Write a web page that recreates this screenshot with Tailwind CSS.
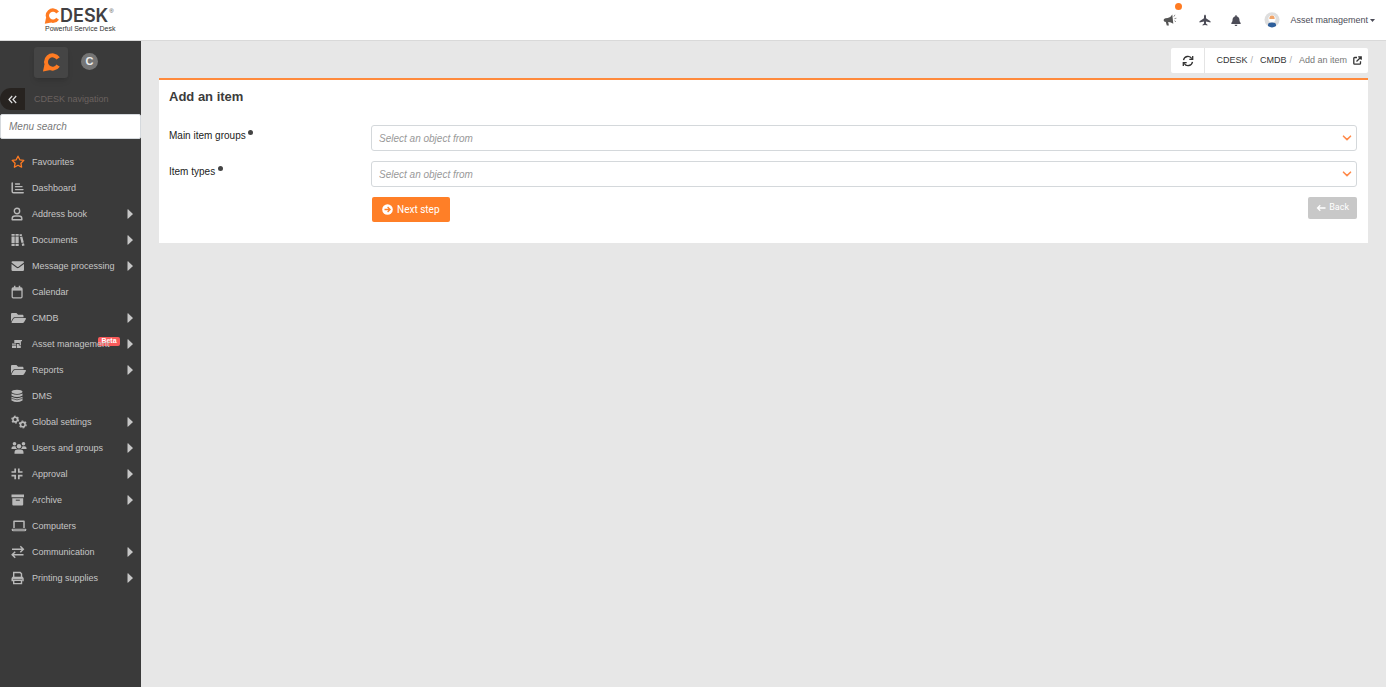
<!DOCTYPE html>
<html lang="en">
<head>
    <meta charset="UTF-8">
    <meta name="viewport" content="width=device-width, initial-scale=1.0">
    <title>CDESK - Add an item</title>
    <script src="https://cdn.jsdelivr.net/npm/@tailwindcss/browser@4"></script>
</head>
<body class="min-h-screen flex flex-col bg-[#e7e7e7] text-[#444] font-['Liberation_Sans',Arial,sans-serif] text-[9px]">
    <!-- Shared shapes -->
    <svg class="hidden">
        <symbol id="logo-c" viewBox="0 0 20 20">
            <path d="M17 5.6A7 7 0 1 0 17 13.4" fill="none" stroke="#ff7b22" stroke-width="4.2"/>
            <path d="M2.6 12L1 19.6L9 18Z" fill="#ff7b22"/>
        </symbol>
        <symbol id="folder" viewBox="0 0 576 512">
            <path d="M572.694 292.093L500.27 416.248A63.997 63.997 0 0 1 444.989 448H45.025c-18.523 0-30.064-20.093-20.731-36.093l72.424-124.155A64 64 0 0 1 152 256h399.964c18.523 0 30.064 20.093 20.73 36.093zM152 224h328v-48c0-26.51-21.49-48-48-48H272l-64-64H48C21.49 64 0 85.49 0 112v278.046l69.077-118.418C86.214 242.25 117.989 224 152 224z"/>
        </symbol>
        <symbol id="caret" viewBox="0 0 6 10"><path d="M.5 0.8Q.5 0 1.2.6L5.5 4.5Q6 5 5.5 5.5L1.2 9.4Q.5 10 .5 9.2Z"/></symbol>
        <symbol id="chevron" viewBox="0 0 10 6"><path d="M1.5 1.2L5 4.6L8.5 1.2" fill="none" stroke="#ff8a4a" stroke-width="1.6" stroke-linecap="round" stroke-linejoin="round"/></symbol>
    </svg>

    <!-- Top bar -->
    <header class="relative z-10 h-[41px] shrink-0 flex items-center justify-between bg-white border-b border-[#d9d9d9] pl-11 pr-[11px]">
        <a href="#" class="flex flex-col">
            <span class="flex items-center h-4">
                <svg class="w-4 h-4"><use href="#logo-c"/></svg>
                <span class="font-['Inter',sans-serif] font-semibold text-[18px] leading-4 text-[#414042]">DESK</span>
                <sup class="self-start top-0 ml-px text-[6px] leading-[6px]">®</sup>
            </span>
            <span class="pl-px text-[7px] leading-[9px] text-[#333]">Powerful Service Desk</span>
        </a>
        <div class="flex items-center text-[#4c4c57]">
            <button type="button" aria-label="News" class="relative mr-[22px]">
                <svg class="w-[14px] h-[14px]" viewBox="0 0 14 14" fill="#555">
                    <path d="M9.3 1.5L10.3 10.8Q7.5 8.9 5.2 9.1L5.9 12.4H3.8L2.8 9Q.7 9 .6 7.2Q.5 5.5 2.5 5.2L4.7 5Q7.6 4.6 9.3 1.5Z"/>
                    <path d="M10.8 3.7L12 1.8M11.4 5.7L13.4 5.2M11.4 7.7L13 8.8" stroke="#777" stroke-width=".8" fill="none"/>
                </svg>
                <span class="absolute -top-[10px] -right-[5px] w-[7px] h-[7px] rounded-full bg-[#ff7b22]"></span>
            </button>
            <button type="button" aria-label="Travel" class="mr-5">
                <svg class="w-3 h-3" viewBox="0 0 12 12" fill="currentColor"><path d="M6 .6Q7 .9 7 2.5V4.3L11.5 7.3V8.5L7 7.5V9.5L8.5 10.7V11.5L6 11L3.5 11.5V10.7L5 9.5V7.5L.5 8.5V7.3L5 4.3V2.5Q5 .9 6 .6Z"/></svg>
            </button>
            <button type="button" aria-label="Notifications" class="mr-[23px]">
                <svg class="w-[10px] h-[11px]" viewBox="0 0 448 512" fill="currentColor"><path d="M224 512c35.32 0 63.97-28.65 63.97-64H160.03c0 35.35 28.65 64 63.97 64zm215.39-149.71c-19.32-20.76-55.47-51.99-55.47-154.29 0-77.7-54.48-139.9-127.94-155.16V32c0-17.67-14.32-32-31.98-32s-31.98 14.33-31.98 32v20.84C118.56 68.1 64.08 130.3 64.08 208c0 102.3-36.15 133.53-55.47 154.29-6 6.45-8.66 14.16-8.61 21.71.11 16.4 12.98 32 32.1 32h383.8c19.12 0 32-15.6 32.1-32 .05-7.55-2.61-15.27-8.61-21.71z"/></svg>
            </button>
            <button type="button" class="flex items-center leading-4">
                <svg class="w-4 h-4 mr-[10px]" viewBox="0 0 16 16">
                    <circle cx="8" cy="7.7" r="7.5" fill="#dedede"/>
                    <circle cx="8" cy="6.8" r="3.6" fill="#fff"/>
                    <path d="M5.3 7A2.7 3.4 0 0 1 10.7 7Z" fill="#f0a469"/>
                    <path d="M4 14V12.5Q4 10.5 8 10.5Q12 10.5 12 12.5V14Q8 16.8 4 14Z" fill="#2f5f9b"/>
                </svg>
                Asset management
                <svg class="w-[5px] h-[3px] ml-[2px]" viewBox="0 0 5 3" fill="currentColor"><path d="M0 0H5L2.5 3Z"/></svg>
            </button>
        </div>
    </header>

    <div class="flex flex-1">
        <!-- Sidebar -->
        <aside class="w-[141px] shrink-0 bg-[#3a3a3a] text-[#c6c6c6]">
            <div class="flex pl-[34px] pt-[6px]">
                <a href="#" aria-label="CDESK" class="w-[34px] h-[31px] rounded-[3px] bg-[#454545] shadow-md flex items-center justify-center">
                    <svg class="w-[19px] h-[19px]"><use href="#logo-c"/></svg>
                </a>
                <a href="#" class="mt-[6px] ml-[13px] w-[17px] h-[17px] rounded-full bg-[#757575] text-[#eee] text-[11px] font-bold flex items-center justify-center">C</a>
            </div>
            <div class="flex items-center mt-[10px]">
                <button type="button" aria-label="Collapse menu" class="w-[25px] h-[22px] rounded-l-full bg-[#272320] flex items-center justify-center">
                    <svg class="w-[9px] h-[9px]" viewBox="0 0 9 9" fill="none" stroke="#ddd" stroke-width="1.2"><path d="M4.2 1L1 4.5L4.2 8M8.2 1L5 4.5L8.2 8"/></svg>
                </button>
                <span class="ml-[9px] leading-4 text-[#6b6260]">CDESK navigation</span>
            </div>
            <input type="text" aria-label="Menu search" placeholder="Menu search" class="block mt-1 w-full h-[25px] px-2 rounded-[2px] bg-white border border-[#d5d9dd] text-[10px] italic text-[#444] placeholder:text-[#777]">

            <nav class="mt-[10px] leading-4 *:flex *:items-center *:h-[26px] *:pl-[11px] *:pr-2">
                <a href="#">
                    <svg class="w-[14px] h-[14px] mr-[7px]" viewBox="0 0 14 14" fill="none" stroke="#ff7b22" stroke-width="1.3" stroke-linejoin="round"><path d="M7 1.2L8.8 4.8L12.8 5.4L9.9 8.2L10.6 12.2L7 10.3L3.4 12.2L4.1 8.2L1.2 5.4L5.2 4.8Z"/></svg>
                    Favourites
                </a>
                <a href="#">
                    <svg class="w-[14px] h-[14px] mr-[7px]" viewBox="0 0 14 14" fill="none" stroke="#b9b9b9" stroke-width="1.5" stroke-linecap="round"><path d="M1.2 2V10.5Q1.2 11.8 2.5 11.8H12.2"/><path d="M4.5 3H8.5M4.5 5.7H11M4.5 8.6H12" stroke-width="1.3"/></svg>
                    Dashboard
                </a>
                <a href="#">
                    <svg class="w-[14px] h-[14px] mr-[7px]" viewBox="0 0 14 14" fill="none" stroke="#b9b9b9" stroke-width="1.4" stroke-linejoin="round"><circle cx="6" cy="4" r="2.7"/><path d="M1.2 12.7V11.6Q1.2 9 4 9H8Q10.8 9 10.8 11.6V12.7Z"/></svg>
                    Address book
                    <svg class="w-[6px] h-[10px] ml-auto" fill="#c6c6c6"><use href="#caret"/></svg>
                </a>
                <a href="#">
                    <svg class="w-[14px] h-[14px] mr-[7px]" viewBox="0 0 14 14" fill="#b9b9b9"><path d="M.5 1H3.7V2.8H.5ZM.5 3.6H3.7V10H.5ZM.5 10.8H3.7V13H.5ZM4.5 1H7.7V2.8H4.5ZM4.5 3.6H7.7V10H4.5ZM4.5 10.8H7.7V13H4.5ZM8.3 1.6L10.6 1L11.1 2.7L8.8 3.3ZM9 4.1L11.3 3.5L12.8 9.4L10.5 10ZM10.7 10.8L13 10.2L13.5 12.4L11.2 13Z"/></svg>
                    Documents
                    <svg class="w-[6px] h-[10px] ml-auto" fill="#c6c6c6"><use href="#caret"/></svg>
                </a>
                <a href="#">
                    <svg class="w-[14px] h-[14px] mr-[7px]" viewBox="0 0 14 14" fill="#b9b9b9"><path d="M1.7 2.3H11.8Q13 2.3 13 3.6L7.5 7.8Q6.8 8.3 6 7.8L.5 3.6Q.5 2.3 1.7 2.3ZM.5 5L5.6 8.8Q6.8 9.5 7.9 8.8L13 5V10.7Q13 12 11.8 12H1.7Q.5 12 .5 10.7Z"/></svg>
                    Message processing
                    <svg class="w-[6px] h-[10px] ml-auto" fill="#c6c6c6"><use href="#caret"/></svg>
                </a>
                <a href="#">
                    <svg class="w-[14px] h-[14px] mr-[7px]" viewBox="0 0 14 14" fill="none" stroke="#b9b9b9" stroke-width="1.3"><rect x="1.2" y="3" width="9.8" height="9.8" rx="1"/><path d="M1 4.4H11" stroke-width="2.4"/><path d="M3.7 .8V3M8.5 .8V3" stroke-width="1.5"/></svg>
                    Calendar
                </a>
                <a href="#">
                    <svg class="w-[15px] h-[14px] mr-[6px]" fill="#b9b9b9"><use href="#folder"/></svg>
                    CMDB
                    <svg class="w-[6px] h-[10px] ml-auto" fill="#c6c6c6"><use href="#caret"/></svg>
                </a>
                <a href="#" class="relative">
                    <svg class="w-[14px] h-[14px] mr-[7px]" viewBox="0 0 14 14" fill="#b9b9b9"><path d="M3.3 3H11V4.3H9.9V8H8.6V6H3.3ZM1 6.5H5V7.7H1ZM1 8.4H5V11H1ZM5.8 7H7.8V8.6H9.8V11H5.8Z"/></svg>
                    <span class="absolute left-[98px] top-[6px] w-[22px] h-[9px] rounded-[2px] bg-[#f95b5b] text-white text-[7px] leading-[8px] font-bold text-center">Beta</span>
                    <span class="relative">Asset management</span>
                    <svg class="w-[6px] h-[10px] ml-auto" fill="#c6c6c6"><use href="#caret"/></svg>
                </a>
                <a href="#">
                    <svg class="w-[15px] h-[14px] mr-[6px]" fill="#b9b9b9"><use href="#folder"/></svg>
                    Reports
                    <svg class="w-[6px] h-[10px] ml-auto" fill="#c6c6c6"><use href="#caret"/></svg>
                </a>
                <a href="#">
                    <svg class="w-[14px] h-[14px] mr-[7px]" viewBox="0 0 14 14" fill="#b9b9b9"><ellipse cx="6" cy="2.8" rx="5.5" ry="2.1"/><path d="M.5 4.4Q6 7.3 11.5 4.4V6.5Q6 9.6 .5 6.5ZM.5 7.7Q6 10.6 11.5 7.7V11.5Q6 14.6 .5 11.5Z"/><path d="M.5 9.4Q6 12.4 11.5 9.4" fill="none" stroke="#3a3a3a" stroke-width=".7"/></svg>
                    DMS
                </a>
                <a href="#">
                    <svg class="w-4 h-[14px] mr-[5px]" viewBox="0 0 16 14" fill="none" stroke="#b9b9b9"><circle cx="4.2" cy="4.6" r="2.3" stroke-width="1.6"/><circle cx="4.2" cy="4.6" r="3.4" stroke-width="1.2" stroke-dasharray="1.8 1.76"/><circle cx="11.8" cy="9.4" r="2.3" stroke-width="1.6"/><circle cx="11.8" cy="9.4" r="3.4" stroke-width="1.2" stroke-dasharray="1.8 1.76"/></svg>
                    Global settings
                    <svg class="w-[6px] h-[10px] ml-auto" fill="#c6c6c6"><use href="#caret"/></svg>
                </a>
                <a href="#">
                    <svg class="w-4 h-[14px] mr-[5px]" viewBox="0 0 16 14" fill="#b9b9b9"><circle cx="3.5" cy="2.8" r="1.8"/><circle cx="12.5" cy="2.8" r="1.8"/><circle cx="8" cy="5.2" r="2.2"/><path d="M.5 8V7Q.5 5.2 2.5 5.2H4.5Q5 7 6 8ZM15.5 8V7Q15.5 5.2 13.5 5.2H11.5Q11 7 10 8ZM3.5 12.8V11.5Q3.5 8.6 6.5 8.6H9.5Q12.5 8.6 12.5 11.5V12.8Z"/></svg>
                    Users and groups
                    <svg class="w-[6px] h-[10px] ml-auto" fill="#c6c6c6"><use href="#caret"/></svg>
                </a>
                <a href="#">
                    <svg class="w-[14px] h-[14px] mr-[7px]" viewBox="0 0 14 14" fill="none" stroke="#b9b9b9" stroke-width="1.7"><path d="M.5 5H4.2V1.5M7.8 1.5V5H11.5M.5 8.7H4.2V12.3M7.8 12.3V8.7H11.5"/></svg>
                    Approval
                    <svg class="w-[6px] h-[10px] ml-auto" fill="#c6c6c6"><use href="#caret"/></svg>
                </a>
                <a href="#">
                    <svg class="w-[14px] h-[14px] mr-[7px]" viewBox="0 0 14 14" fill="#b9b9b9"><path d="M.5 1.5H13V4.3H.5ZM1.3 5.2H12.2V11.5Q12.2 12.5 11.2 12.5H2.3Q1.3 12.5 1.3 11.5Z"/><path d="M4.8 7.2H8.8" stroke="#3a3a3a"/></svg>
                    Archive
                    <svg class="w-[6px] h-[10px] ml-auto" fill="#c6c6c6"><use href="#caret"/></svg>
                </a>
                <a href="#">
                    <svg class="w-4 h-[14px] mr-[5px]" viewBox="0 0 16 14" fill="none" stroke="#b9b9b9" stroke-width="1.5" stroke-linejoin="round"><path d="M3 9V2.2H13V9"/><path d="M1.2 10.3H14.8V10.8Q14.8 11.8 13.5 11.8H2.5Q1.2 11.8 1.2 10.8Z" stroke-width="1.1"/></svg>
                    Computers
                </a>
                <a href="#">
                    <svg class="w-[14px] h-[14px] mr-[7px]" viewBox="0 0 14 14" fill="none" stroke="#b9b9b9" stroke-width="1.5"><path d="M1 4.2H12M9.3 1.2L12.3 4.2L9.3 7.2M12.5 9.8H1.5M4.2 6.8L1.2 9.8L4.2 12.8"/></svg>
                    Communication
                    <svg class="w-[6px] h-[10px] ml-auto" fill="#c6c6c6"><use href="#caret"/></svg>
                </a>
                <a href="#">
                    <svg class="w-[14px] h-[14px] mr-[7px]" viewBox="0 0 14 14" fill="none" stroke="#b9b9b9" stroke-width="1.4"><path d="M2.7 6V1.5H9.2L10.5 2.8V6"/><path d="M2 10.2H.5V7.5Q.5 6 2 6H11.2Q12.7 6 12.7 7.5V10.2H11.2V7.6H2Z" fill="#b9b9b9" stroke="none"/><path d="M1.4 6.8H11.8" stroke-width="2.2"/><path d="M2.7 9.2H10.5V12.6H2.7Z"/></svg>
                    Printing supplies
                    <svg class="w-[6px] h-[10px] ml-auto" fill="#c6c6c6"><use href="#caret"/></svg>
                </a>
            </nav>
        </aside>

        <!-- Main content -->
        <main class="flex-1 pl-[18px] pr-[18px] pt-[7px]">
            <div class="flex justify-end">
                <div class="flex h-[25px] bg-white rounded-[2px]">
                    <button type="button" aria-label="Refresh" class="w-[34px] flex items-center justify-center border-r border-[#e4e4e4]">
                        <svg class="w-3 h-3" viewBox="0 0 12 12" fill="none" stroke="#333" stroke-width="1.3"><path d="M1.5 5.2A4.5 4.5 0 0 1 9.8 3.6M10.5 6.8A4.5 4.5 0 0 1 2.2 8.4"/><path d="M10.7 1V4.4H7.3M1.3 11V7.6H4.7"/></svg>
                    </button>
                    <nav class="flex items-center pl-[11px] pr-[6px] text-[#333]">
                        <a href="#">CDESK</a><span class="ml-[3px] mr-[7px] text-[#aaa]">/</span>
                        <a href="#">CMDB</a><span class="ml-[3px] mr-[7px] text-[#aaa]">/</span>
                        <span class="text-[#777]">Add an item</span>
                        <a href="#" aria-label="Open in new window" class="ml-[6px]">
                            <svg class="w-[9px] h-[9px]" viewBox="0 0 9 9" fill="none" stroke="#333" stroke-width="1.3"><path d="M4 1.5H1.6Q.8 1.5 .8 2.3V7.4Q.8 8.2 1.6 8.2H6.7Q7.5 8.2 7.5 7.4V5.2"/><path d="M3.5 5.5L7.8 1.2M5.2 .8H8.2V3.8"/></svg>
                        </a>
                    </nav>
                </div>
            </div>

            <section class="mt-[5px] bg-white border-t-2 border-[#ff8a3c] pl-[10px] pr-[11px] pt-[9px] pb-[21px]">
                <h1 class="text-[13px] leading-4 font-bold text-[#3c3c3c]">Add an item</h1>
                <form class="mt-5 grid grid-cols-[202px_1fr] gap-y-[10px]">
                    <label for="group" class="pt-[5px] text-[10px] leading-3 text-[#222]">Main item groups <span class="inline-block align-super w-[5px] h-[5px] rounded-full bg-[#444]"></span></label>
                    <div class="relative">
                        <select id="group" class="block w-full h-[26px] appearance-none rounded-[3px] border border-[#d4d8db] bg-white px-[7px] text-[10px] italic text-[#999]"><option>Select an object from</option></select>
                        <svg class="absolute right-[5px] top-[10px] w-[10px] h-[6px] pointer-events-none"><use href="#chevron"/></svg>
                    </div>
                    <label for="type" class="pt-[5px] text-[10px] leading-3 text-[#222]">Item types <span class="inline-block align-super w-[5px] h-[5px] rounded-full bg-[#444]"></span></label>
                    <div class="relative">
                        <select id="type" class="block w-full h-[26px] appearance-none rounded-[3px] border border-[#d4d8db] bg-white px-[7px] text-[10px] italic text-[#999]"><option>Select an object from</option></select>
                        <svg class="absolute right-[5px] top-[10px] w-[10px] h-[6px] pointer-events-none"><use href="#chevron"/></svg>
                    </div>
                    <div class="col-start-2 flex items-start justify-between pl-px font-['Roboto',sans-serif]">
                        <button type="submit" class="flex items-center h-[25px] px-[10px] gap-1 rounded-[2px] bg-[#ff7f27] text-white text-[10px]">
                            <svg class="w-[11px] h-[11px]" viewBox="0 0 11 11"><circle cx="5.5" cy="5.5" r="5.3" fill="#fff"/><path d="M2.5 5.5H8M5.6 3L8.1 5.5L5.6 8" fill="none" stroke="#ff7f27" stroke-width="1.3"/></svg>
                            Next step
                        </button>
                        <button type="button" class="flex items-center h-[22px] px-2 gap-[3px] rounded-[2px] bg-[#c8c8c8] text-white text-[9px]">
                            <svg class="w-[10px] h-[8px]" viewBox="0 0 10 8" fill="none" stroke="#fff" stroke-width="1.3"><path d="M9.5 4H1.5M4.3 1.2L1.5 4L4.3 6.8"/></svg>
                            Back
                        </button>
                    </div>
                </form>
            </section>
        </main>
    </div>
</body>
</html>
